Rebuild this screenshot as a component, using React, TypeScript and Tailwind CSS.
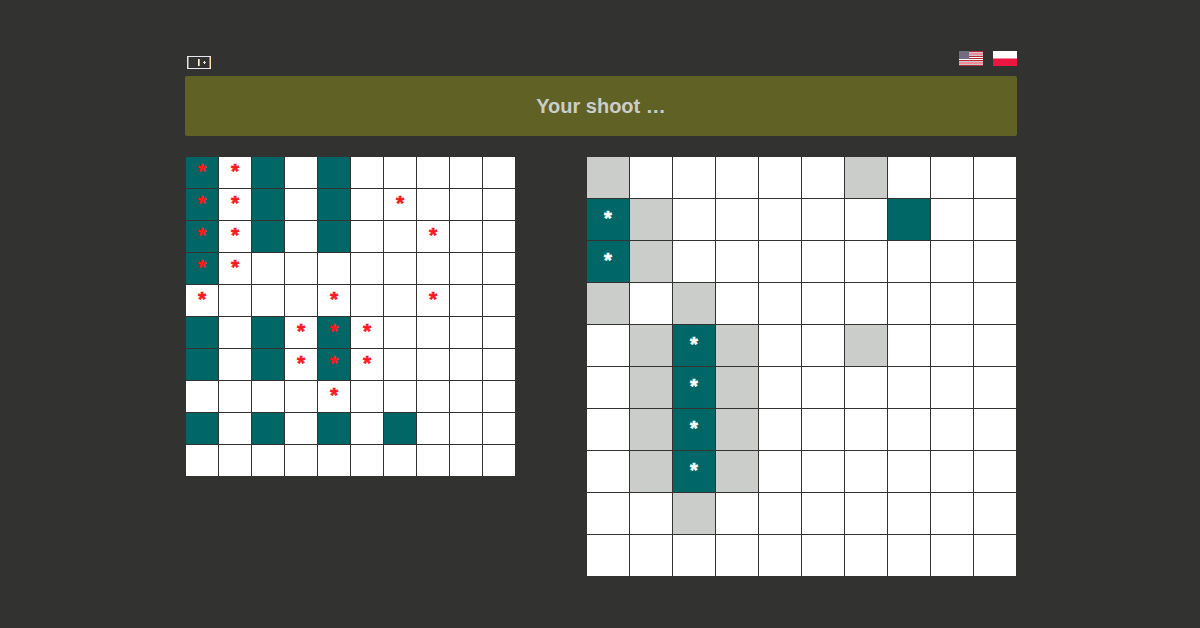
const OWN_BOARD = [
  'HMS.S.....',
  'HMS.S.M...',
  'HMS.S..M..',
  'HM........',
  'M...M..M..',
  'S.SMHM....',
  'S.SMHM....',
  '....M.....',
  'S.S.S.S...',
  '..........',
];

const ENEMY_BOARD = [
  'G.....G...',
  'WG.....S..',
  'WG........',
  'G.G.......',
  '.GWG..G...',
  '.GWG......',
  '.GWG......',
  '.GWG......',
  '..G.......',
  '..........',
];

const CELL_STYLE: Record<string, string> = {
  '.': 'bg-white',
  G: 'bg-[#cbcdca]',
  S: 'bg-[#006766]',
  H: 'bg-[#006766] text-[#fc1821]',
  M: 'bg-white text-[#fc1821]',
  W: 'bg-[#006766] text-white',
};

function Board({ rows, size }: { rows: string[]; size: 'small' | 'large' }) {
  const cell =
    size === 'small'
      ? 'h-[31px] w-8 text-[21px] leading-[28px]'
      : 'h-[41px] w-[42px] text-[20px] leading-[39px]';
  return (
    <div className="flex flex-col gap-px">
      {rows.map((row, y) => (
        <div key={y} className="flex gap-px">
          {row.split('').map((kind, x) => (
            <div
              key={x}
              className={`${cell} ${CELL_STYLE[kind]} text-center font-bold [-webkit-text-stroke:0.6px_currentColor]`}
            >
              {'HMW'.includes(kind) ? '*' : ''}
            </div>
          ))}
        </div>
      ))}
    </div>
  );
}

function BoardIcon() {
  return (
    <svg width="24" height="13" viewBox="0 0 24 13" shapeRendering="crispEdges">
      <path d="M0 0h24v1H0zM0 12h24v1H0z" fill="#e9e5ee" />
      <path d="M0 1h1v11H0zM23 1h1v11h-1z" fill="#ffe0a8" />
      <path d="M1 1h1v11H1zM22 1h1v11h-1z" fill="#8f8a86" />
      <path d="M11 3h1v7h-1z" fill="#fff1cf" />
      <path d="M12 3h1v7h-1z" fill="#b3b4b8" />
      <path d="M17 5h1v3h-1z" fill="#f4f1e6" />
      <path d="M16 6h3v1h-3z" fill="#d8d3c4" />
    </svg>
  );
}

function UsFlag() {
  return (
    <svg width="24" height="15" viewBox="0 0 24 15" shapeRendering="crispEdges">
      <path d="M0 0h24v15H0z" fill="#f38a9b" />
      <path d="M0 0h24v1H0zM0 5h24v1H0zM0 7h24v1H0zM0 9h24v1H0zM0 14h24v1H0z" fill="#b72b3b" />
      <path d="M0 1h24v1H0zM0 4h24v1H0zM0 10h24v1H0zM0 13h24v1H0z" fill="#cbc7c8" />
      <path d="M0 6h24v1H0zM0 8h24v1H0z" fill="#fff" />
      <path d="M0 0h10v8H0z" fill="#706c82" />
    </svg>
  );
}

function PlFlag() {
  return (
    <svg width="24" height="15" viewBox="0 0 24 15" shapeRendering="crispEdges">
      <path d="M0 0h24v7H0z" fill="#fff" />
      <path d="M0 7h24v1H0z" fill="#f38a9b" />
      <path d="M0 8h24v7H0z" fill="#eb1740" />
    </svg>
  );
}

export default function App() {
  return (
    <div className="h-[628px] bg-[#323230] pt-[51px] pl-[185px] font-['Liberation_Sans',Arial,sans-serif]">
      <main className="w-[832px]">
        <header className="flex h-[25px] items-start justify-between">
          <button className="mt-[5px] ml-0.5 block" aria-label="Boards">
            <BoardIcon />
          </button>
          <nav className="flex gap-2.5">
            <UsFlag />
            <PlFlag />
          </nav>
        </header>
        <div className="flex h-[60px] items-center justify-center rounded-[2px] bg-[#606125] text-xl font-bold text-[#cbcdca]">
          Your shoot …
        </div>
        <div className="mt-[21px] flex items-start justify-between px-px">
          <Board rows={OWN_BOARD} size="small" />
          <Board rows={ENEMY_BOARD} size="large" />
        </div>
      </main>
    </div>
  );
}
